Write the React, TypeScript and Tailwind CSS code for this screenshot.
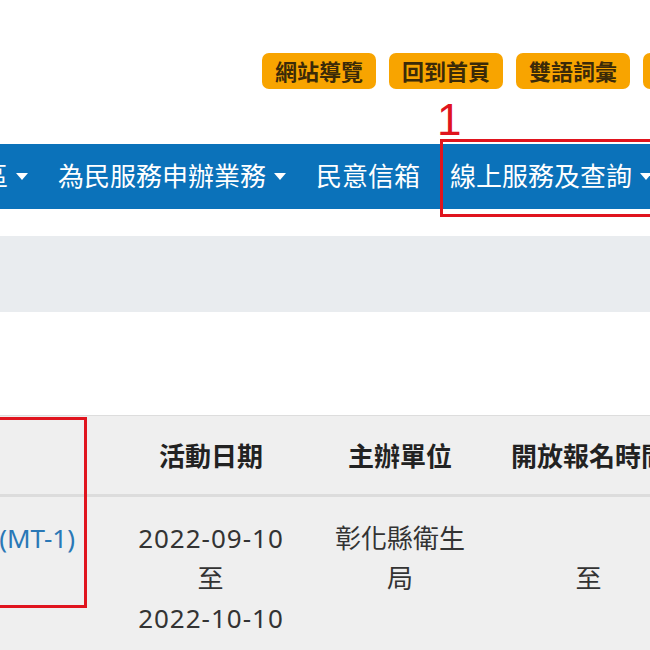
import { ReactNode } from "react";

const topLinks = ["網站導覽", "回到首頁", "雙語詞彙", "English"];

const navItems = [
  { label: "主題專區", caret: true },
  { label: "為民服務申辦業務", caret: true },
  { label: "民意信箱", caret: false },
  { label: "線上服務及查詢", caret: true },
];

const Caret = () => (
  <span className="ml-[8px] inline-block h-0 w-0 border-x-[6.5px] border-t-[7px] border-x-transparent border-t-white" />
);

const Cell = ({ children, head }: { children: ReactNode; head?: boolean }) =>
  head ? (
    <th className="px-[10px] pt-[21px] pb-[18px] text-center align-top font-bold text-[#222]">
      {children}
    </th>
  ) : (
    <td className="px-[10px] pt-[21px] pb-[20px] text-center align-top leading-[40px] text-[#333]">
      {children}
    </td>
  );

const Lines = ({ items }: { items: string[] }) => (
  <>
    {items.map((t, i) => (
      <div key={i} className="h-[40px] tracking-[1px]">
        {t}
      </div>
    ))}
  </>
);

export default function App() {
  return (
    <div className="relative h-[650px] w-[650px] overflow-hidden bg-white font-['Noto_Sans','Noto_Sans_CJK_TC',sans-serif] text-[26px] leading-[39px]">
      {/* top links */}
      <div className="flex h-[144px] items-start gap-[13px] whitespace-nowrap pl-[262px] pt-[53px]">
        {topLinks.map((t) => (
          <a
            key={t}
            href="#"
            className="flex h-[36px] w-[114px] shrink-0 items-center justify-center rounded-[7px] bg-[#f8a400] text-[22px] font-bold leading-none text-[#3b2a08]"
          >
            {t}
          </a>
        ))}
      </div>

      {/* main nav */}
      <nav className="h-[65px] bg-[#0b72ba]">
        <ul className="-ml-[111px] flex h-full items-center whitespace-nowrap text-white">
          {navItems.map((n) => (
            <li key={n.label} className="flex shrink-0 items-center px-[15px]">
              <span>{n.label}</span>
              {n.caret && <Caret />}
            </li>
          ))}
        </ul>
      </nav>

      {/* breadcrumb strip */}
      <div className="mt-[27px] h-[76px] bg-[#e9ecef]" />

      {/* activity table */}
      <div className="mt-[103px]">
        <table className="-ml-[300px] w-[1000px] table-fixed border-collapse border-t border-[#dddddd] bg-[#efefef]">
          <colgroup>
            <col className="w-[400px]" />
            <col className="w-[222px]" />
            <col className="w-[156px]" />
            <col className="w-[222px]" />
          </colgroup>
          <thead>
            <tr className="border-b-[3px] border-[#dcdcdc]">
              <Cell head>活動名稱</Cell>
              <Cell head>活動日期</Cell>
              <Cell head>主辦單位</Cell>
              <Cell head>開放報名時間</Cell>
            </tr>
          </thead>
          <tbody>
            <tr>
              <td className="pt-[21px] pr-[25px] text-right align-top leading-[40px] whitespace-nowrap">
                <a href="#" className="text-[#2a78b6]">
                  社區心理健康講座(MT-1)
                </a>
              </td>
              <Cell>
                <Lines items={["2022-09-10", "至", "2022-10-10"]} />
              </Cell>
              <Cell>彰化縣衛生局</Cell>
              <Cell>
                <Lines items={["", "至", ""]} />
              </Cell>
            </tr>
          </tbody>
        </table>
      </div>

      {/* annotation marks */}
      <span className="absolute left-[437px] top-[92px] font-['Liberation_Sans',sans-serif] text-[44px] leading-[56px] text-[#e0141e]">
        1
      </span>
      <div className="absolute left-[440px] top-[139px] h-[78px] w-[260px] border-[3px] border-[#e0141e]" />
      <div className="absolute -left-[10px] top-[417px] h-[191px] w-[97px] border-[3px] border-[#e0141e]" />
    </div>
  );
}
